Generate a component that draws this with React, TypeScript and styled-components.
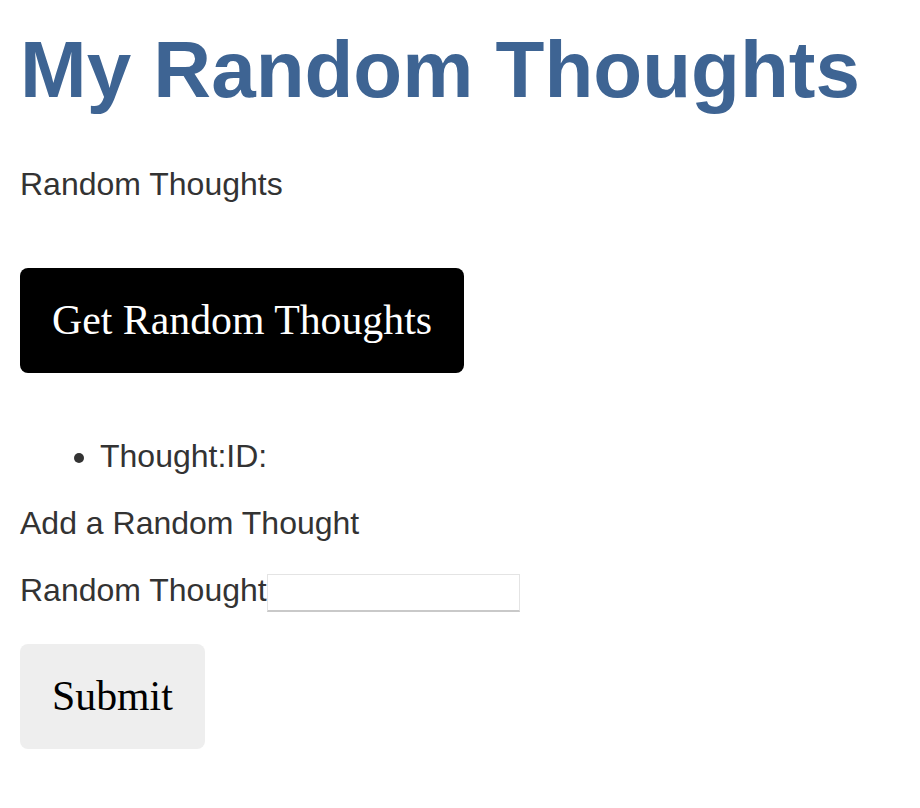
import React, { useState } from 'react';
import styled, { createGlobalStyle } from 'styled-components';

const GlobalStyle = createGlobalStyle`
  body {
    margin: 0;
    background: #ffffff;
    font-family: "Liberation Sans", Arial, Helvetica, sans-serif;
    color: #333333;
  }
`;

const Page = styled.div`
  display: flex;
  flex-direction: column;
  align-items: flex-start;
  padding: 24px 20px;
`;

const Title = styled.h1`
  margin: 0;
  font-size: 80px;
  line-height: 92px;
  font-weight: 700;
  color: #3e6493;
`;

const SectionText = styled.p<{ $top: number }>`
  margin: ${(p) => p.$top}px 0 0;
  font-size: 32px;
  line-height: 37px;
`;

const ActionButton = styled.button<{ $dark?: boolean; $top: number }>`
  margin-top: ${(p) => p.$top}px;
  padding: 32px;
  border: none;
  border-radius: 8px;
  background: ${(p) => (p.$dark ? '#000000' : '#eeeeee')};
  color: ${(p) => (p.$dark ? '#ffffff' : '#000000')};
  font-family: "Liberation Serif", Georgia, serif;
  font-size: 41.8px;
  line-height: 41px;
  cursor: pointer;
`;

const ThoughtList = styled.ul`
  margin: 65px 0 0;
  padding-left: 80px;
  font-size: 32px;
  line-height: 37px;
`;

const ThoughtItem = styled.li``;

const FieldRow = styled.form`
  display: flex;
  align-items: center;
  margin-top: 30px;
`;

const FieldLabel = styled.label`
  font-size: 32px;
  line-height: 37px;
  padding-bottom: 4px;
`;

const TextInput = styled.input`
  box-sizing: border-box;
  width: 253px;
  height: 38px;
  margin: 0;
  padding: 0 6px;
  border: 1px solid #e4e4e4;
  border-bottom: 2px solid #c9c9c9;
  font-family: "Liberation Sans", Arial, sans-serif;
  font-size: 20px;
  outline: none;
`;

type Thought = { id: string; thought: string };

const App: React.FC = () => {
  const [thoughts] = useState<Thought[]>([{ id: '', thought: '' }]);
  const [draft, setDraft] = useState('');

  return (
    <>
      <GlobalStyle />
      <Page>
        <Title>My Random Thoughts</Title>
        <SectionText $top={50}>Random Thoughts</SectionText>
        <ActionButton $dark $top={65}>Get Random Thoughts</ActionButton>

        <ThoughtList>
          {thoughts.map((t, i) => (
            <ThoughtItem key={i}>
              Thought:{t.thought}ID:{t.id}
            </ThoughtItem>
          ))}
        </ThoughtList>

        {/* add form */}
        <SectionText $top={30}>Add a Random Thought</SectionText>
        <FieldRow id="thought-form" onSubmit={(e) => e.preventDefault()}>
          <FieldLabel htmlFor="thought">Random Thought</FieldLabel>
          <TextInput
            id="thought"
            value={draft}
            onChange={(e) => setDraft(e.target.value)}
          />
        </FieldRow>
        <ActionButton type="submit" form="thought-form" $top={31}>
          Submit
        </ActionButton>
      </Page>
    </>
  );
};

export default App;
